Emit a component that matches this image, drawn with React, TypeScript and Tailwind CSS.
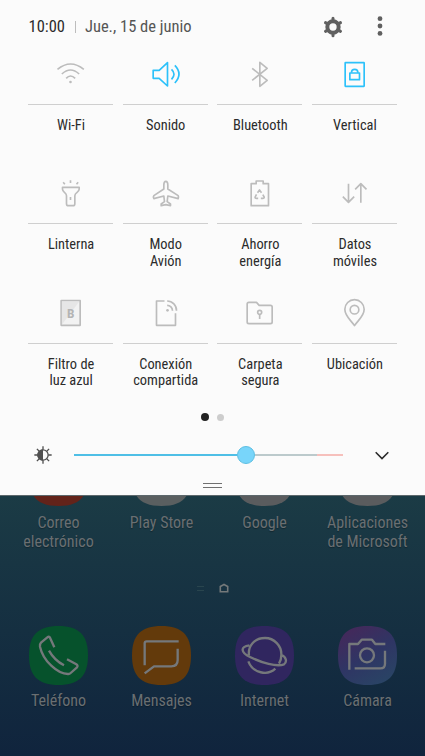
import type { ReactNode } from "react"

type Tile = {
  label: string[]
  icon: ReactNode
  active?: boolean
}

const tiles: Tile[] = [
  {
    label: ["Wi-Fi"],
    icon: (
      <>
        <path d="M9 34Q48 2 88 34M22 48Q48 24 74 48M35 61Q48 47 62 61" />
        <circle cx="48" cy="72" r="4" fill="currentColor" stroke="none" />
      </>
    ),
  },
  {
    label: ["Sonido"],
    active: true,
    icon: <path d="M11 37H29L54 14V84L29 61H11ZM66 34Q81 48 66 64M76 22Q101 48 76 75" />,
  },
  {
    label: ["Bluetooth"],
    icon: <path d="M26 31L71 67L49 85V13L71 31L26 67" />,
  },
  {
    label: ["Vertical"],
    active: true,
    icon: (
      <>
        <rect x="20" y="14" width="57" height="71" rx="1" />
        <rect x="34" y="45" width="29" height="20" />
        <path d="M39 44V43A9.500 9 0 0 1 58 43V44" />
      </>
    ),
  },
  {
    label: ["Linterna"],
    icon: (
      <path d="M24 31H74V37C74 46 61 46 61 56V80Q61 86 55 86H42Q36 86 36 80V56C36 46 24 46 24 37ZM48 60V69M48 10V18M26 16L31 22M71 16L66 22" />
    ),
  },
  {
    label: ["Modo", "Avión"],
    icon: (
      <path d="M49 13C45 13 43 18 43 24V36L13 56Q10 60 13 65L43 57L45 74L35 81V86L49 83L63 86V81L53 74L55 57L86 65Q88 60 86 56L55 36V24C55 18 53 13 49 13Z" />
    ),
  },
  {
    label: ["Ahorro", "energía"],
    icon: (
      <>
        <path d="M23 20H38V12H59V20H75V86H23Z" />
        <path d="M42 47L48 39L54 47M58 53L62 60Q63 64 58 64H52M39 52L35 60Q34 64 39 64H44" />
      </>
    ),
  },
  {
    label: ["Datos", "móviles"],
    icon: <path d="M30 20V76M13 59L30 76L47 59M67 77V20M50 37L67 20L84 37" />,
  },
  {
    label: ["Filtro de", "luz azul"],
    icon: (
      <>
        <rect x="20" y="11" width="57" height="74" fill="#f2f2f2" />
        <path d="M22 13H75L22 83Z" fill="#e6e6e6" stroke="none" />
        <text
          x="48.500"
          y="62"
          textAnchor="middle"
          className="font-['Roboto',sans-serif] text-[40px] font-bold"
          fill="#b4b4b4"
          stroke="none"
        >
          B
        </text>
      </>
    ),
  },
  {
    label: ["Conexión", "compartida"],
    icon: (
      <>
        <path d="M45 12H21V85H78V49M53 25A16 16 0 0 1 69 41M53 12A28 28 0 0 1 81 41" />
        <circle cx="54" cy="40" r="4" fill="currentColor" stroke="none" />
      </>
    ),
  },
  {
    label: ["Carpeta", "segura"],
    icon: (
      <>
        <path d="M16 16H39L47 25H81Q86 25 86 30V75Q86 80 81 80H16Q11 80 11 75V21Q11 16 16 16Z" />
        <circle cx="48.500" cy="46" r="6" />
        <path d="M48.500 52V66" />
      </>
    ),
  },
  {
    label: ["Ubicación"],
    icon: (
      <>
        <path d="M48 86C38 70 19 58 19 37A29 29 0 0 1 77 37C77 58 58 70 48 86Z" />
        <circle cx="48" cy="38" r="13" />
      </>
    ),
  },
]

const squircle = "M88.500 0C150 0 177 27 177 88.500S150 177 88.500 177 0 150 0 88.500 27 0 88.500 0Z"

const recentApps = [
  { label: ["Correo", "electrónico"], color: "#63231a" },
  { label: ["Play Store"], color: "#5a5f60" },
  { label: ["Google"], color: "#5a5c5e" },
  { label: ["Aplicaciones", "de Microsoft"], color: "#5a5c5e" },
]

const dockApps = [
  {
    label: "Teléfono",
    color: "#06522c",
    glyph: (
      <path d="M76 64L63 35Q60 30 55 34L36 50Q32 54 33 62C42 104 86 145 118 144Q122 144 125 141L144 124Q148 119 142 115L114 100M60 74Q76 103 105 118" />
    ),
  },
  {
    label: "Mensajes",
    color: "#633a0b",
    glyph: <path d="M140 46H44Q38 46 38 52V118M137 68V102Q137 121 118 121H66L38 142" />,
  },
  {
    label: "Internet",
    color: "#30265f",
    glyph: (
      <path d="M42 88C38 60 58 36 90 36C118 36 140 60 139 86C139 96 137 105 132 113M43 58C14 62 18 80 45 93C80 110 125 124 147 115C157 108 154 92 139 87M40 106C54 142 98 150 121 128" />
    ),
  },
  {
    label: "Cámara",
    color: "url(#camera)",
    glyph: (
      <>
        <path d="M34 131V54H60L71 41H102L112 54H142M141 74V113Q141 127 127 127H50" />
        <circle cx="87" cy="88" r="21" />
      </>
    ),
  },
]

function Header() {
  return (
    <header className="flex h-[54px] items-center pl-[28.500px] pr-[42px] text-[16.500px]">
      <span className="text-[#2b2b2b]">10:00</span>
      <span className="ml-[10px] mr-[9px] h-3 w-px bg-[#bdbdbd]" />
      <span className="text-[#555]">Jue., 15 de junio</span>
      <svg viewBox="0 0 66 66" className="ml-auto size-[22px] text-[#606060]" fill="none" stroke="currentColor">
        <circle cx="33" cy="33" r="17" strokeWidth="12" />
        {[0, 60, 120].map((angle) => (
          <path
            key={angle}
            d="M33 7V15M33 51V59"
            strokeWidth="9"
            strokeLinecap="round"
            transform={`rotate(${angle} 33 33)`}
          />
        ))}
      </svg>
      <svg viewBox="0 0 6 22" className="ml-[33px] h-[22px] w-[6px]" fill="#606060">
        <circle cx="3" cy="2.700" r="2.400" />
        <circle cx="3" cy="10" r="2.400" />
        <circle cx="3" cy="17.400" r="2.400" />
      </svg>
    </header>
  )
}

function QuickTile({ tile }: { tile: Tile }) {
  return (
    <div className="flex h-[119.400px] flex-col items-center">
      <svg
        viewBox="-1.500 0 99 96"
        className={tile.active ? "mt-1 h-8 w-[33px] text-[#2cc1fa]" : "mt-1 h-8 w-[33px] text-[#bcbcbc]"}
        fill="none"
        stroke="currentColor"
        strokeWidth="5"
        strokeLinejoin="round"
      >
        {tile.icon}
      </svg>
      <div className="mt-[14px] h-px w-full bg-[#cfcfcf]" />
      <div className="mt-[13px] pl-px text-center text-[14.400px] leading-[16.500px] text-[#2b2b2b]">
        {tile.label.map((line) => (
          <div key={line}>{line}</div>
        ))}
      </div>
    </div>
  )
}

function Brightness() {
  return (
    <div className="flex h-[18px] items-center pl-[34px] pr-[36px]">
      <svg viewBox="0 0 54 54" className="size-[18px]" fill="none" stroke="#505050">
        <circle cx="27" cy="27" r="15.500" strokeWidth="4" />
        <path d="M27 10A17 17 0 0 0 27 44Z" fill="#505050" stroke="none" />
        {[0, 45, 90, 135].map((angle) => (
          <path key={angle} d="M27 1V11M27 43V53" strokeWidth="4" transform={`rotate(${angle} 27 27)`} />
        ))}
      </svg>
      <div className="ml-[22px] flex items-center">
        <div className="h-[2.500px] w-[162.500px] bg-[#4fbfe6]" />
        <div className="size-[18px] rounded-full border border-[#5dbfe2] bg-[#78d5fa]" />
        <div className="h-[2.500px] w-[62.500px] bg-[#bccacc]" />
        <div className="h-[2.500px] w-[26px] bg-[#f6c0bc]" />
      </div>
      <svg viewBox="0 0 14 9" className="ml-auto h-[9px] w-[14px]" fill="none" stroke="#2b2b2b" strokeWidth="1.600">
        <path d="M0.700 1.200L7 7.500L13.300 1.200" />
      </svg>
    </div>
  )
}

export default function App() {
  return (
    <div className="flex h-[756px] w-[425px] flex-col overflow-hidden bg-[#10243d] font-['Roboto_Condensed','Roboto',sans-serif] [font-stretch:75%]">
      <section className="flex h-[495px] shrink-0 flex-col bg-[#fbfbfb]">
        <Header />
        <div className="grid grid-cols-4 gap-x-[9.500px] px-7">
          {tiles.map((tile) => (
            <QuickTile key={tile.label.join(" ")} tile={tile} />
          ))}
        </div>
        <div className="mt-[1px] flex h-2 items-center justify-center gap-2">
          <span className="size-2 rounded-full bg-[#222]" />
          <span className="size-[7px] rounded-full bg-[#cdcdcd]" />
        </div>
        <div className="mt-[25px]">
          <Brightness />
        </div>
        <div className="mx-auto mt-[19px] h-[5px] w-[19px] border-y border-[#707070]" />
      </section>

      <main className="flex grow flex-col border-t border-[#5d686c] bg-linear-to-b from-[#1b3b45] to-[#10243d] text-center text-[16px] leading-[19px] text-[#6a6f72] [text-shadow:0_1px_1px_rgb(0_0_0/0.3)]">
        <div className="grid h-[83px] grid-cols-4 pl-[7px] pr-[6px]">
          {recentApps.map((app) => (
            <div key={app.label[0]} className="flex flex-col items-center">
              <div className="flex h-[10px] w-[59px] items-end overflow-hidden">
                <svg viewBox="0 0 177 177" className="size-[59px] shrink-0">
                  <path d={squircle} fill={app.color} />
                </svg>
              </div>
              <div className="mt-[7px]">
                {app.label.map((line) => (
                  <div key={line}>{line}</div>
                ))}
              </div>
            </div>
          ))}
        </div>
        <div className="flex h-[18px] items-center justify-center gap-[15px]">
          <span className="ml-px h-[5px] w-[7px] border-y border-[#29454e]" />
          <svg viewBox="0 0 10 10" className="size-[10px]" fill="none" stroke="#74797a" strokeWidth="1.600">
            <path d="M1.300 8.700V3.500L5 1.500L8.700 3.500V8.700Z" />
          </svg>
        </div>
        <div className="mt-[29px] grid grid-cols-4 pl-[7px] pr-[6px]">
          {dockApps.map((app) => (
            <div key={app.label} className="flex flex-col items-center">
              <svg viewBox="0 0 177 177" className="size-[59px]" fill="none">
                <defs>
                  <linearGradient id="camera" x1="0.200" y1="0" x2="0.800" y2="1">
                    <stop offset="0" stopColor="#45285a" />
                    <stop offset="0.500" stopColor="#2f3564" />
                    <stop offset="1" stopColor="#294565" />
                  </linearGradient>
                </defs>
                <path d={squircle} fill={app.color} />
                <g stroke="#75787b" strokeWidth="7" strokeLinejoin="round">
                  {app.glyph}
                </g>
              </svg>
              <div className="mt-[6px]">{app.label}</div>
            </div>
          ))}
        </div>
      </main>
    </div>
  )
}
